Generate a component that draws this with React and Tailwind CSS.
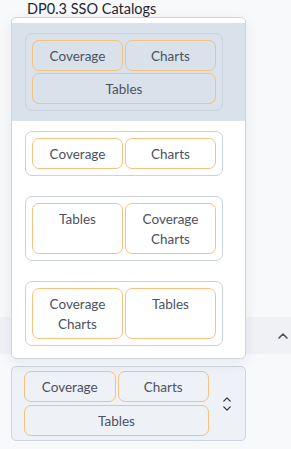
import React from 'react';

const pill =
  'rounded-[7px] border border-[#f6c27e] px-1 py-[4.5px] text-center text-[13.5px] leading-[20px] text-[#4b5262]';

function Group({ items, wide }) {
  return (
    <div className="w-[198px] rounded-[7px] border border-[#c9d2dd] p-[6px]">
      <div className="grid grid-cols-2 gap-[2px]">
        {items.map((it, i) => (
          <div key={i} className={`${pill} ${wide === i ? 'col-span-2' : ''}`}>
            {it.map((line) => (
              <div key={line}>{line}</div>
            ))}
          </div>
        ))}
      </div>
    </div>
  );
}

function ChevronUp({ className }) {
  return (
    <svg viewBox="0 0 10 6" className={className} fill="none" stroke="currentColor" strokeWidth="1.6" strokeLinecap="round" strokeLinejoin="round">
      <path d="M1 5 L5 1 L9 5" />
    </svg>
  );
}

export default function App() {
  const options = [
    { items: [['Coverage'], ['Charts'], ['Tables']], wide: 2, active: true },
    { items: [['Coverage'], ['Charts']] },
    { items: [['Tables'], ['Coverage', 'Charts']] },
    { items: [['Coverage', 'Charts'], ['Tables']] },
  ];

  return (
    <div className="relative min-h-screen bg-[#f8f9fb] font-['Lato',sans-serif]">
      <div className="h-[17px] pl-[27px] text-[14.5px] leading-[18px] text-[#262730]">DP0.3 SSO Catalogs</div>

      <div className="mt-[300px] flex h-[37px] items-center justify-end bg-[#eff1f5] pr-[3px]">
        <ChevronUp className="h-[6px] w-[10px] text-[#4b5262]" />
      </div>

      <div className="ml-[11px] mt-[12px] flex w-[235px] items-center rounded-[5px] border border-[#cdd5df] bg-[#eef1f6] py-[4px] pl-[12px]">
        <div className="grid w-[185px] grid-cols-2 gap-x-[2px] gap-y-[3px]">
          <div className={pill}>Coverage</div>
          <div className={pill}>Charts</div>
          <div className={`${pill} col-span-2`}>Tables</div>
        </div>
        <div className="ml-[14px] flex flex-col items-center gap-[4px] text-[#31333f]">
          <ChevronUp className="h-[5px] w-[8px]" />
          <ChevronUp className="h-[5px] w-[8px] rotate-180" />
        </div>
      </div>

      <div className="absolute left-[11px] top-[17px] w-[235px] rounded-[5px] border border-[#cdd5df] bg-white pb-[2px] pt-[5px] shadow-[0_4px_14px_rgba(30,40,60,0.08)]">
        {options.map((o, i) => (
          <div key={i} className={`py-[10px] pl-[13px] ${o.active ? 'bg-[#d9e2ea]' : ''}`}>
            <Group items={o.items} wide={o.wide} />
          </div>
        ))}
      </div>
    </div>
  );
}
